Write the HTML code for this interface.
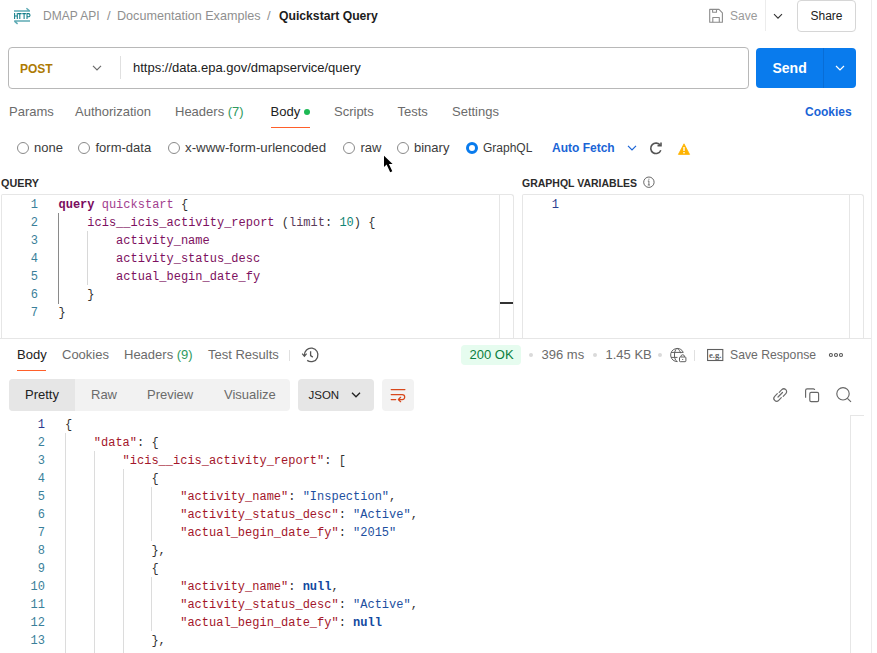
<!DOCTYPE html>
<html><head><meta charset="utf-8">
<style>
*{margin:0;padding:0;box-sizing:border-box}
html,body{width:877px;height:653px;overflow:hidden;background:#fff}
body{position:relative;font-family:"Liberation Sans",sans-serif;font-size:13px;color:#212121}
.a{position:absolute;white-space:nowrap}
.t{position:absolute;white-space:nowrap;line-height:16px;font-size:13px}
.m{font-family:"Liberation Mono",monospace;font-size:12px;line-height:18px;position:absolute;white-space:pre}
.g{color:#6b6b6b}
.ln{color:#3a7f9a;text-align:right;width:20px}
svg{position:absolute;overflow:visible}
.radio{position:absolute;width:12px;height:12px;border:1px solid #8a8a8a;border-radius:50%;top:142px}
</style></head><body>

<!-- top bar -->
<svg style="left:12px;top:6px" width="20" height="20" viewBox="12 6 20 20">
  <g stroke="#5eaab4" stroke-width="1.5" fill="none"><path d="M14 11H30M26.4 8.2L29.4 10.8"/><path d="M14.2 21H30M14.4 21.2L17.6 23.8"/></g>
  <g stroke="#127d89" stroke-width="1.05" fill="none"><path d="M14.6 13V19M17.3 13V19M14.6 16H17.3"/><path d="M18 13.6H21.6M19.8 13.6V19"/><path d="M22.3 13.6H25.9M24.1 13.6V19"/><path d="M27 19V13.6H28.4A1.6 1.6 0 0 1 28.4 16.8H27"/></g>
</svg>
<div class="t g" style="left:43px;top:7.5px;font-size:12px;color:#8f8f8f">DMAP API</div>
<div class="t g" style="left:107px;top:7.5px;color:#8f8f8f">/</div>
<div class="t g" style="left:117px;top:7.5px;font-size:12.6px;color:#8f8f8f">Documentation Examples</div>
<div class="t g" style="left:267px;top:7.5px;color:#8f8f8f">/</div>
<div class="t" style="left:279px;top:7.5px;font-size:12.2px;font-weight:bold;color:#1c1c1c">Quickstart Query</div>

<svg style="left:705px;top:5px" width="22" height="22" viewBox="705 5 22 22">
  <g stroke="#8c8c8c" stroke-width="1.1" fill="none" stroke-linejoin="round"><path d="M709.7 9.4H719L722.4 12.8V22.2H709.7Z"/><path d="M712.6 9.4V12.2H716.5V9.4"/><path d="M712.8 22.2V17.5H719.3V22.2"/></g>
</svg>
<div class="t" style="left:730px;top:8px;font-size:12px;color:#9a9a9a">Save</div>
<div class="a" style="left:765px;top:0;width:1px;height:31px;background:#ececec"></div>
<svg style="left:773px;top:13px" width="10" height="7" viewBox="0 0 10 7"><path d="M1 1.2L5 5.2L9 1.2" stroke="#333" stroke-width="1.1" fill="none"/></svg>
<div class="a" style="left:797px;top:0;width:59px;height:32px;border:1px solid #d6d6d6;border-radius:4px"></div>
<div class="t" style="left:810.5px;top:8px;font-size:12px">Share</div>

<div class="a" style="left:871px;top:0;width:1px;height:653px;background:#ececec"></div>

<!-- url bar -->
<div class="a" style="left:8px;top:47px;width:741px;height:42px;border:1px solid #b8b8b8;border-radius:4px"></div>
<div class="t" style="left:20px;top:60.5px;font-size:12px;font-weight:bold;color:#AD7A03">POST</div>
<svg style="left:92px;top:65px" width="10" height="6" viewBox="0 0 10 6"><path d="M1 0.8L5 4.8L9 0.8" stroke="#6b6b6b" stroke-width="1.2" fill="none"/></svg>
<div class="a" style="left:120px;top:56px;width:1px;height:23px;background:#e0e0e0"></div>
<div class="t" style="left:133px;top:60px">https://data.epa.gov/dmapservice/query</div>

<div class="a" style="left:756px;top:48px;width:100px;height:40px;background:#097BED;border-radius:4px"></div>
<div class="a" style="left:823px;top:48px;width:1px;height:40px;background:#086dd6"></div>
<div class="t" style="left:772.5px;top:59.5px;font-size:14px;font-weight:bold;color:#fff">Send</div>
<svg style="left:835px;top:65px" width="10" height="7" viewBox="0 0 10 7"><path d="M1 1L5 5L9 1" stroke="#fff" stroke-width="1.2" fill="none"/></svg>

<!-- request tabs -->
<div class="t g" style="left:9px;top:104px">Params</div>
<div class="t g" style="left:75px;top:104px">Authorization</div>
<div class="t g" style="left:175px;top:104px">Headers <span style="color:#2e9a5e">(7)</span></div>
<div class="t" style="left:270.5px;top:104px">Body</div>
<div class="a" style="left:304px;top:109px;width:6px;height:6px;border-radius:50%;background:#1db954"></div>
<div class="a" style="left:271px;top:127px;width:39px;height:1px;background:#FF5F2a"></div>
<div class="t g" style="left:334px;top:104px">Scripts</div>
<div class="t g" style="left:397.5px;top:104px">Tests</div>
<div class="t g" style="left:452px;top:104px">Settings</div>
<div class="t" style="left:805px;top:104px;font-size:12px;font-weight:bold;color:#1a64d6">Cookies</div>

<!-- radio row -->
<div class="radio" style="left:17px"></div>
<div class="t g" style="left:34px;top:139.5px;color:#3b3b3b">none</div>
<div class="radio" style="left:78px"></div>
<div class="t" style="left:95.5px;top:139.5px;color:#3b3b3b">form-data</div>
<div class="radio" style="left:167.5px"></div>
<div class="t" style="left:185px;top:139.5px;font-size:13.3px;color:#3b3b3b">x-www-form-urlencoded</div>
<div class="radio" style="left:343px"></div>
<div class="t" style="left:360.5px;top:139.5px;color:#3b3b3b">raw</div>
<div class="radio" style="left:397px"></div>
<div class="t" style="left:414px;top:139.5px;color:#3b3b3b">binary</div>
<div class="radio" style="left:466px;border:3.5px solid #097BED"></div>
<div class="t" style="left:483px;top:139.5px;font-size:12px;color:#3b3b3b">GraphQL</div>
<div class="t" style="left:552px;top:139.5px;font-size:12px;font-weight:bold;color:#1a64d6">Auto Fetch</div>
<svg style="left:627px;top:145px" width="10" height="6" viewBox="0 0 10 6"><path d="M1 0.8L5 4.8L9 0.8" stroke="#1a64d6" stroke-width="1.2" fill="none"/></svg>
<svg style="left:649px;top:142px" width="14" height="13" viewBox="0 0 14 13">
  <path d="M11.3 3.5A5.2 5.2 0 1 0 11.8 8.2" stroke="#555" stroke-width="1.6" fill="none"/>
  <path d="M8.5 3.8H12V0.5" stroke="#555" stroke-width="1.6" fill="none"/>
</svg>
<svg style="left:678px;top:143px" width="12" height="12" viewBox="0 0 12 12">
  <path d="M6 0.8L11.6 11.4H0.4Z" fill="#FFB400" stroke="#FFB400" stroke-width="0.8" stroke-linejoin="round"/>
  <rect x="5.3" y="4" width="1.4" height="4" fill="#fff"/><rect x="5.3" y="9" width="1.4" height="1.4" fill="#fff"/>
</svg>

<!-- cursor -->
<svg style="left:380px;top:152px" width="16" height="24" viewBox="380 152 16 24">
  <path d="M384 155.8V167L386.6 164.6L390.2 172.2L392.3 171.2L388.9 164.1H392.6Z" fill="#000"/>
</svg>

<!-- query editor -->
<div class="t" style="left:1px;top:175px;font-size:10.8px;font-weight:bold;color:#2b2b2b">QUERY</div>
<div class="t" style="left:522px;top:175px;font-size:10.5px;font-weight:bold;color:#2b2b2b">GRAPHQL VARIABLES</div>
<svg style="left:643px;top:176px" width="12" height="12" viewBox="643 176 12 12">
  <circle cx="648.9" cy="182.2" r="5.2" stroke="#666" stroke-width="1" fill="none"/>
  <path d="M648.9 180.9V185M647.8 181H649.1M647.8 185H650" stroke="#666" stroke-width="0.9" fill="none"/>
  <rect x="648.4" y="178.7" width="1" height="1" fill="#666"/>
</svg>

<div class="a" style="left:1px;top:194px;width:513px;height:145px;border:1px solid #e6e6e6;border-bottom:none;border-radius:2px 3px 0 0"></div>
<div class="a" style="left:499px;top:195px;width:1px;height:143px;background:#e6e6e6"></div>
<div class="a" style="left:500px;top:302px;width:13px;height:2px;background:#333"></div>
<div class="a" style="left:522px;top:194px;width:342px;height:145px;border:1px solid #e6e6e6;border-bottom:none;border-radius:2px 3px 0 0"></div>
<div class="a" style="left:849px;top:195px;width:1px;height:143px;background:#e6e6e6"></div>
<div class="a" style="left:0;top:338px;width:871px;height:1px;background:#e6e6e6;z-index:2"></div>

<div class="m ln" style="left:18px;top:196px">1
2
3
4
5
6
7</div>
<div class="a" style="left:58px;top:213px;width:1px;height:91px;background:#8a8a8a"></div>
<div class="a" style="left:87px;top:231px;width:1px;height:54px;background:#d8d8d8"></div>
<div class="m" style="left:58.5px;top:196px;color:#333"><b style="color:#7a0b5e">query</b> <span style="color:#a23e8e">quickstart</span> {
    <span style="color:#7d1060">icis__icis_activity_report</span> (<span style="color:#5a3a5a">limit</span>: <span style="color:#0f8575">10</span>) {
        <span style="color:#7d1060">activity_name</span>
        <span style="color:#7d1060">activity_status_desc</span>
        <span style="color:#7d1060">actual_begin_date_fy</span>
    }
}</div>
<div class="m ln" style="left:539px;top:196px;color:#2a3f8f">1</div>


<!-- response tabs -->
<div class="t" style="left:17px;top:346.5px">Body</div>
<div class="a" style="left:17px;top:370px;width:29px;height:1px;background:#FF5F2a"></div>
<div class="t g" style="left:62px;top:346.5px">Cookies</div>
<div class="t g" style="left:124px;top:346.5px">Headers <span style="color:#2e9a5e">(9)</span></div>
<div class="t g" style="left:208px;top:346.5px">Test Results</div>
<div class="a" style="left:289px;top:350px;width:1px;height:11px;background:#e0e0e0"></div>

<!-- status -->
<div class="a" style="left:461px;top:345px;width:60px;height:20px;background:#e6fcef;border-radius:4px"></div>
<div class="t" style="left:469.5px;top:346.5px;color:#0a8040">200 OK</div>
<div class="a" style="left:529px;top:353px;width:4px;height:4px;border-radius:50%;background:#dadada"></div>
<div class="t g" style="left:541.5px;top:346.5px">396 ms</div>
<div class="a" style="left:593px;top:353px;width:4px;height:4px;border-radius:50%;background:#dadada"></div>
<div class="t g" style="left:605.5px;top:346.5px">1.45 KB</div>
<div class="a" style="left:657.5px;top:353px;width:4px;height:4px;border-radius:50%;background:#dadada"></div>
<svg style="left:665px;top:343px" width="25" height="24" viewBox="665 343 25 24">
  <g stroke="#5f5f5f" stroke-width="1" fill="none">
   <path d="M683.4 352.6A6.6 6.6 0 1 0 677.6 361.6"/>
   <path d="M677 348.3C673.6 350.6 673.6 359.4 677 361.6M677 348.3C679.3 349.8 680.3 351.6 680.6 353.2"/>
   <path d="M671 352.4H683M671 357.4H677.5"/>
   <rect x="679.5" y="357" width="6.4" height="4.7" rx="0.8"/>
   <path d="M680.9 357V356.2A1.85 1.85 0 0 1 684.5 356.2V357"/>
  </g>
  <rect x="682.2" y="359" width="1" height="1" fill="#5f5f5f"/>
</svg>
<div class="a" style="left:694px;top:350px;width:1px;height:11px;background:#e0e0e0"></div>
<svg style="left:705px;top:347px" width="20" height="16" viewBox="705 347 20 16">
  <rect x="707.6" y="349.5" width="15.2" height="11" stroke="#5f5f5f" stroke-width="1.1" fill="none"/>
  <text x="709" y="357.6" font-family="Liberation Serif" font-size="8.2" font-weight="bold" fill="#5f5f5f" textLength="12.5" lengthAdjust="spacingAndGlyphs">e.g.</text>
</svg>
<div class="t g" style="left:730px;top:346.5px;font-size:12.2px">Save Response</div>
<svg style="left:826px;top:350px" width="20" height="10" viewBox="826 350 20 10">
  <g stroke="#555" stroke-width="1.1" fill="none"><circle cx="830.9" cy="355" r="1.5"/><circle cx="836" cy="355" r="1.5"/><circle cx="841" cy="355" r="1.5"/></g>
</svg>

<!-- history icon -->
<svg style="left:298px;top:344px" width="24" height="22" viewBox="298 344 24 22">
  <g stroke="#555" stroke-width="1.3" fill="none">
   <path d="M304.4 355.5A6.8 6.8 0 1 1 307.2 360.4"/>
   <path d="M302.2 353.6L304.4 356.2L306.6 353.6"/>
   <path d="M310.6 351.2V355.6L312.8 357.1"/>
  </g>
</svg>

<!-- segmented -->
<div class="a" style="left:9px;top:379px;width:281px;height:32px;background:#f2f2f2;border-radius:4px"></div>
<div class="a" style="left:9px;top:379px;width:66px;height:32px;background:#e6e6e6;border-radius:4px 0 0 4px"></div>
<div class="t" style="left:25px;top:387px">Pretty</div>
<div class="t g" style="left:91px;top:387px">Raw</div>
<div class="t g" style="left:147px;top:387px">Preview</div>
<div class="t g" style="left:224px;top:387px">Visualize</div>
<div class="a" style="left:298px;top:379px;width:76px;height:32px;background:#e6e6e6;border-radius:4px"></div>
<div class="t" style="left:308.5px;top:387px;font-size:11.5px">JSON</div>
<svg style="left:351px;top:392px" width="10" height="6" viewBox="0 0 10 6"><path d="M1 0.8L5 4.8L9 0.8" stroke="#212121" stroke-width="1.3" fill="none"/></svg>
<div class="a" style="left:382px;top:379px;width:32px;height:32px;background:#f2f2f2;border-radius:4px"></div>
<svg style="left:386px;top:383px" width="24" height="24" viewBox="386 383 24 24">
  <g stroke="#d8481c" stroke-width="1.25" fill="none" stroke-linecap="round" stroke-linejoin="round">
   <path d="M391.2 389.5H404.9"/>
   <path d="M391.2 394.5H402.2A2.5 2.5 0 0 1 402.2 399.5H398.6"/>
   <path d="M400.6 397.3L398.4 399.5L400.6 401.7"/>
   <path d="M391.2 399.5H395.7"/>
  </g>
</svg>

<!-- right icons -->
<svg style="left:773px;top:388px" width="15" height="14" viewBox="0 0 15 14">
  <g stroke="#6b6b6b" stroke-width="1.2" fill="none" stroke-linecap="round">
   <path d="M6.2 4.3L8.8 1.7A2.5 2.5 0 0 1 12.8 5.7L10.2 8.3"/>
   <path d="M8.3 9.7L5.7 12.3A2.5 2.5 0 0 1 1.7 8.3L4.3 5.7"/>
   <path d="M5 9L9.5 4.5"/>
  </g>
</svg>
<svg style="left:800px;top:384px" width="24" height="22" viewBox="800 384 24 22">
  <g stroke="#666" stroke-width="1.15" fill="none">
   <path d="M805.6 397.8V390.4A1.5 1.5 0 0 1 807.1 388.9H813.4A1.3 1.3 0 0 1 814.7 390"/>
   <rect x="809.8" y="392.4" width="8.8" height="9.2" rx="1.3"/>
  </g>
</svg>
<svg style="left:832px;top:384px" width="24" height="22" viewBox="832 384 24 22">
  <g stroke="#666" stroke-width="1.15" fill="none">
   <circle cx="843" cy="393.8" r="6.2"/>
   <path d="M847.4 398.3L851 401.9"/>
  </g>
</svg>

<div class="a" style="left:850px;top:415px;width:14px;height:238px;border-left:1px solid #e6e6e6;border-top:1px solid #e6e6e6"></div>

<!-- response code -->
<div class="m ln" style="left:25px;top:416px"><span style="color:#2b3a8c">1</span>
2
3
4
5
6
7
8
9
10
11
12
13</div>
<div class="a" style="left:65px;top:433px;width:1px;height:220px;background:#dcdcdc"></div>
<div class="a" style="left:94px;top:451px;width:1px;height:202px;background:#dcdcdc"></div>
<div class="a" style="left:123px;top:469px;width:1px;height:184px;background:#dcdcdc"></div>
<div class="a" style="left:151px;top:487px;width:1px;height:54px;background:#dcdcdc"></div>
<div class="a" style="left:151px;top:577px;width:1px;height:54px;background:#dcdcdc"></div>
<div class="m" style="left:65px;top:416px;color:#333">{
    <span style="color:#a3162a">"data"</span>: {
        <span style="color:#a3162a">"icis__icis_activity_report"</span>: [
            {
                <span style="color:#a3162a">"activity_name"</span>: <span style="color:#1d4fa0">"Inspection"</span>,
                <span style="color:#a3162a">"activity_status_desc"</span>: <span style="color:#1d4fa0">"Active"</span>,
                <span style="color:#a3162a">"actual_begin_date_fy"</span>: <span style="color:#1d4fa0">"2015"</span>
            },
            {
                <span style="color:#a3162a">"activity_name"</span>: <b style="color:#1249a0">null</b>,
                <span style="color:#a3162a">"activity_status_desc"</span>: <span style="color:#1d4fa0">"Active"</span>,
                <span style="color:#a3162a">"actual_begin_date_fy"</span>: <b style="color:#1249a0">null</b>
            },</div>

</body></html>
